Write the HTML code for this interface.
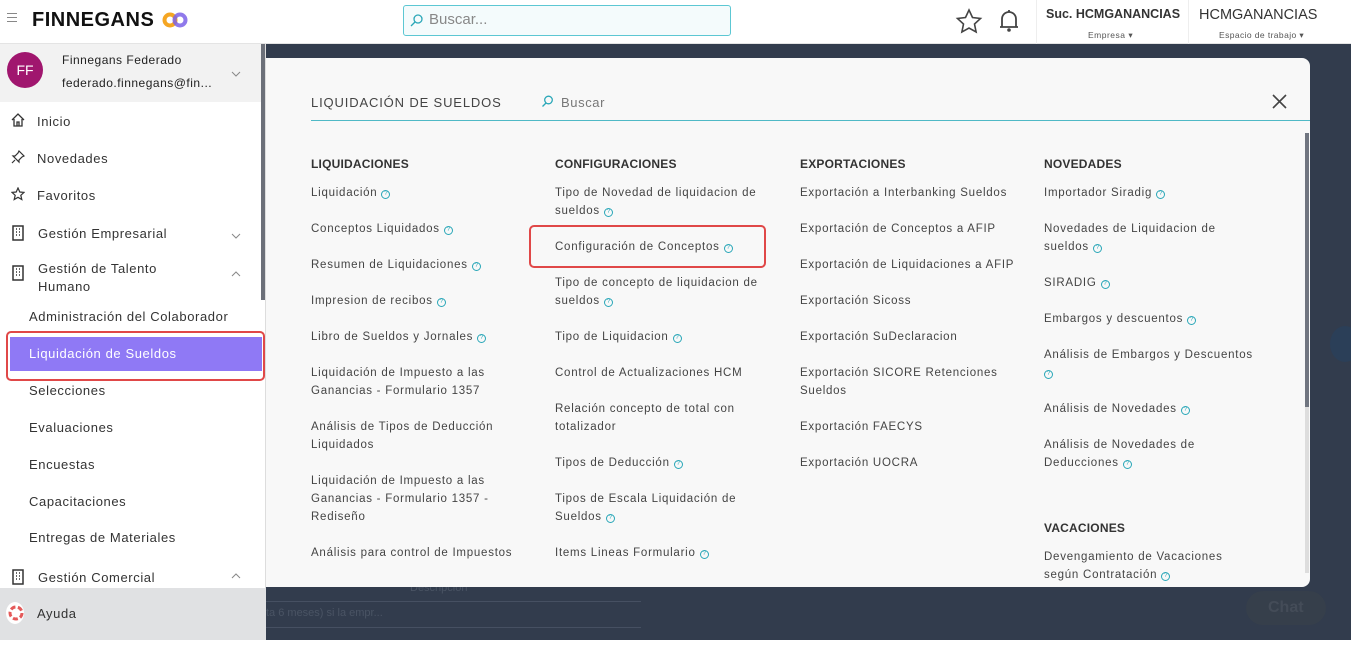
<!DOCTYPE html>
<html><head><meta charset="utf-8"><style>
*{margin:0;padding:0;box-sizing:border-box}
body{width:1351px;height:665px;overflow:hidden;background:#fff;font-family:"Liberation Sans",sans-serif;color:#333;position:relative}
.abs{position:absolute}
.top{left:0;top:0;width:1351px;height:44px;background:#fff;border-bottom:1px solid #e4e4e4}
.dark{left:266px;top:44px;width:1085px;height:596px;background:#323c4d}
.side{left:0;top:44px;width:266px;height:596px;background:#fff;border-right:1px solid #ddd}
.modal{left:266px;top:58px;width:1044px;height:529px;background:#f8f8f8;border-radius:0 8px 8px 0}
.it{position:absolute;font-size:11.5px;color:#444;line-height:18px;width:215px;letter-spacing:.75px}
.h{position:absolute;font-size:12px;font-weight:bold;color:#333;letter-spacing:.2px}
.q{display:inline-block;width:9px;height:9px;border:1px solid #2aa7b8;border-radius:50%;font-size:6px;line-height:7px;text-align:center;color:#2aa7b8;margin-left:4px;vertical-align:1px;letter-spacing:0}
.nav{position:absolute;left:37px;font-size:13px;color:#333;letter-spacing:.6px}
.sub{position:absolute;left:29px;font-size:13px;color:#333;letter-spacing:.6px}
.ic{position:absolute;left:11px}
</style></head><body>
<div class="abs top"></div>
<div class="abs" style="left:7px;top:13px;width:10px;height:1px;background:#888;box-shadow:0 4px 0 #888,0 8px 0 #888"></div>
<div class="abs" style="left:32px;top:9px;font-size:20px;font-weight:bold;letter-spacing:.5px;color:#111">FINNEGANS</div>
<svg class="abs" style="left:162px;top:12px" width="26" height="16"><circle cx="8" cy="8" r="5.5" fill="none" stroke="#f5a623" stroke-width="4"/><circle cx="18" cy="8" r="5.5" fill="none" stroke="#7b61e8" stroke-width="4" opacity=".85"/></svg>
<div class="abs" style="left:403px;top:5px;width:328px;height:31px;border:1px solid #5cc7d3;border-radius:3px;background:#f4fbfc"></div>
<svg class="abs" style="left:410px;top:13px" width="14" height="14"><circle cx="8" cy="6" r="4" fill="none" stroke="#2aa7b8" stroke-width="1.3"/><line x1="5" y1="9" x2="1" y2="13" stroke="#2aa7b8" stroke-width="1.3"/></svg>
<div class="abs" style="left:429px;top:11px;font-size:15px;color:#888">Buscar...</div>
<svg class="abs" style="left:955px;top:8px" width="28" height="26"><path d="M14 2l3.5 7.5 8 1-6 5.5 1.6 8-7.1-4-7.1 4 1.6-8-6-5.5 8-1z" fill="none" stroke="#444" stroke-width="1.6"/></svg>
<svg class="abs" style="left:998px;top:8px" width="22" height="26"><path d="M4 19V11a7 7 0 0114 0v8H4zM2 19h18M11 2v2" fill="none" stroke="#444" stroke-width="1.8"/><circle cx="11" cy="22" r="1.8" fill="#444"/></svg>
<div class="abs" style="left:1036px;top:0;width:1px;height:44px;background:#eee"></div>
<div class="abs" style="left:1188px;top:0;width:1px;height:44px;background:#eee"></div>
<div class="abs" style="left:1046px;top:7px;font-size:12.5px;font-weight:bold;color:#333">Suc. HCMGANANCIAS</div>
<div class="abs" style="left:1088px;top:30px;font-size:8.5px;color:#555;letter-spacing:.5px">Empresa ▾</div>
<div class="abs" style="left:1199px;top:7px;font-size:14.5px;color:#333">HCMGANANCIAS</div>
<div class="abs" style="left:1219px;top:30px;font-size:8.5px;color:#555;letter-spacing:.4px">Espacio de trabajo ▾</div>

<div class="abs dark"></div>
<div class="abs" style="left:1330px;top:326px;width:30px;height:36px;border-radius:50%;background:#2b3f58"></div>
<div class="abs" style="left:1246px;top:591px;width:80px;height:34px;border-radius:17px;background:#363f4b;color:#444c58;font-size:16px;font-weight:bold;padding:8px 0 0 22px">Chat</div>
<div class="abs" style="left:410px;top:582px;font-size:11px;color:#4a5464">Descripción</div>
<div class="abs" style="left:266px;top:601px;width:375px;height:1px;background:#465062"></div>
<div class="abs" style="left:266px;top:607px;font-size:11px;color:#4a5464">ta 6 meses) si la empr...</div>
<div class="abs" style="left:266px;top:627px;width:375px;height:1px;background:#465062"></div>

<div class="abs side"></div>
<div class="abs" style="left:0;top:44px;width:262px;height:58px;background:#f2f2f2"></div>
<div class="abs" style="left:7px;top:52px;width:36px;height:36px;border-radius:50%;background:#a0166e;color:#fff;font-size:14px;text-align:center;line-height:36px">FF</div>
<div class="abs" style="left:62px;top:53px;font-size:12px;color:#222;letter-spacing:.5px">Finnegans Federado</div>
<div class="abs" style="left:62px;top:76px;font-size:12px;color:#222;letter-spacing:.5px">federado.finnegans@fin...</div>
<svg class="abs" style="left:231px;top:71px" width="10" height="6"><path d="M1 1l4 4 4-4" fill="none" stroke="#888"/></svg>
<div class="abs" style="left:261px;top:44px;width:4px;height:256px;background:#6c7079"></div>
<svg class="ic" style="top:113px" width="14" height="14"><path d="M1 7L7 1l6 6M3 6v7h8V6M6 13V9h2v4" fill="none" stroke="#333" stroke-width="1.3"/></svg><div class="nav" style="top:114px">Inicio</div>
<svg class="ic" style="top:150px" width="14" height="14"><path d="M8 1l5 5-2 1-3 3 0 2-6-6 2 0 3-3zM4 10l-3 3" fill="none" stroke="#333" stroke-width="1.2"/></svg><div class="nav" style="top:151px">Novedades</div>
<svg class="ic" style="top:187px" width="14" height="14"><path d="M7 1l1.8 4 4.2.4-3.2 2.9 1 4.2L7 10.3 3.2 12.5l1-4.2L1 5.4 5.2 5z" fill="none" stroke="#333" stroke-width="1.2"/></svg><div class="nav" style="top:188px">Favoritos</div>
<svg class="ic" style="top:225px" width="14" height="16"><rect x="2" y="1" width="10" height="14" fill="none" stroke="#333" stroke-width="1.5"/><path d="M5 4h1M8 4h1M5 7h1M8 7h1M5 10h1M8 10h1" stroke="#333" stroke-width="1.5"/></svg><div class="nav" style="top:226px;left:38px">Gestión Empresarial</div>
<svg class="abs" style="left:231px;top:233px" width="10" height="6"><path d="M1 1l4 4 4-4" fill="none" stroke="#888"/></svg>
<svg class="ic" style="top:265px" width="14" height="16"><rect x="2" y="1" width="10" height="14" fill="none" stroke="#333" stroke-width="1.5"/><path d="M5 4h1M8 4h1M5 7h1M8 7h1M5 10h1M8 10h1" stroke="#333" stroke-width="1.5"/></svg><div class="nav" style="top:260px;left:38px;line-height:18px">Gestión de Talento<br>Humano</div>
<svg class="abs" style="left:231px;top:271px" width="10" height="6"><path d="M1 5l4-4 4 4" fill="none" stroke="#888"/></svg>
<div class="sub" style="top:309px">Administración del Colaborador</div>
<div class="abs" style="left:10px;top:337px;width:252px;height:34px;background:#8f79f5"></div>
<div class="abs" style="left:6px;top:331px;width:259px;height:50px;border:2px solid #e04848;border-radius:5px"></div>
<div class="sub" style="top:346px;color:#fff">Liquidación de Sueldos</div>
<div class="sub" style="top:383px">Selecciones</div>
<div class="sub" style="top:420px">Evaluaciones</div>
<div class="sub" style="top:457px">Encuestas</div>
<div class="sub" style="top:494px">Capacitaciones</div>
<div class="sub" style="top:530px">Entregas de Materiales</div>
<svg class="ic" style="top:569px" width="14" height="16"><rect x="2" y="1" width="10" height="14" fill="none" stroke="#333" stroke-width="1.5"/><path d="M5 4h1M8 4h1M5 7h1M8 7h1M5 10h1M8 10h1" stroke="#333" stroke-width="1.5"/></svg><div class="nav" style="top:570px;left:38px">Gestión Comercial</div>
<svg class="abs" style="left:231px;top:573px" width="10" height="6"><path d="M1 5l4-4 4 4" fill="none" stroke="#888"/></svg>
<div class="abs" style="left:0;top:588px;width:266px;height:52px;background:#e0e1e3"></div>
<div class="abs" style="left:6px;top:602px;width:18px;height:22px;border-radius:50%;background:#fff"></div>
<svg class="abs" style="left:8px;top:605px" width="16" height="16"><circle cx="8" cy="8" r="6" fill="none" stroke="#e45a5a" stroke-width="3" stroke-dasharray="5 2.5"/></svg>
<div class="nav" style="top:606px">Ayuda</div>

<div class="abs modal"></div>
<div class="abs" style="left:311px;top:95px;font-size:13px;color:#444;letter-spacing:.85px">LIQUIDACIÓN DE SUELDOS</div>
<svg class="abs" style="left:541px;top:95px" width="13" height="13"><circle cx="7.5" cy="5" r="3.8" fill="none" stroke="#2aa7b8" stroke-width="1.3"/><line x1="5" y1="8" x2="1.5" y2="11.5" stroke="#2aa7b8" stroke-width="1.3"/></svg>
<div class="abs" style="left:561px;top:95px;font-size:13px;color:#777;letter-spacing:.6px">Buscar</div>
<svg class="abs" style="left:1272px;top:94px" width="15" height="15"><path d="M1 1l13 13M14 1L1 14" stroke="#444" stroke-width="1.6"/></svg>
<div class="abs" style="left:311px;top:120px;width:999px;height:1px;background:#4fb9c6"></div>
<div class="abs" style="left:1305px;top:133px;width:4px;height:440px;background:#ddd"></div>
<div class="abs" style="left:1305px;top:133px;width:4px;height:274px;background:#707580"></div>

<div class="h" style="left:311px;top:157px">LIQUIDACIONES</div>
<div class="h" style="left:555px;top:157px">CONFIGURACIONES</div>
<div class="h" style="left:800px;top:157px">EXPORTACIONES</div>
<div class="h" style="left:1044px;top:157px">NOVEDADES</div>
<div class="h" style="left:1044px;top:521px">VACACIONES</div>

<div class="it" style="left:311px;top:184px">Liquidación<span class="q">?</span></div>
<div class="it" style="left:311px;top:220px">Conceptos Liquidados<span class="q">?</span></div>
<div class="it" style="left:311px;top:256px">Resumen de Liquidaciones<span class="q">?</span></div>
<div class="it" style="left:311px;top:292px">Impresion de recibos<span class="q">?</span></div>
<div class="it" style="left:311px;top:328px">Libro de Sueldos y Jornales<span class="q">?</span></div>
<div class="it" style="left:311px;top:364px">Liquidación de Impuesto a las<br>Ganancias - Formulario 1357</div>
<div class="it" style="left:311px;top:418px">Análisis de Tipos de Deducción<br>Liquidados</div>
<div class="it" style="left:311px;top:472px">Liquidación de Impuesto a las<br>Ganancias - Formulario 1357 -<br>Rediseño</div>
<div class="it" style="left:311px;top:544px;width:240px">Análisis para control de Impuestos</div>

<div class="it" style="left:555px;top:184px">Tipo de Novedad de liquidacion de<br>sueldos<span class="q">?</span></div>
<div class="abs" style="left:529px;top:225px;width:237px;height:43px;border:2px solid #e04848;border-radius:5px"></div>
<div class="it" style="left:555px;top:238px;width:230px">Configuración de Conceptos<span class="q">?</span></div>
<div class="it" style="left:555px;top:274px">Tipo de concepto de liquidacion de<br>sueldos<span class="q">?</span></div>
<div class="it" style="left:555px;top:328px">Tipo de Liquidacion<span class="q">?</span></div>
<div class="it" style="left:555px;top:364px;width:230px">Control de Actualizaciones HCM</div>
<div class="it" style="left:555px;top:400px">Relación concepto de total con<br>totalizador</div>
<div class="it" style="left:555px;top:454px">Tipos de Deducción<span class="q">?</span></div>
<div class="it" style="left:555px;top:490px">Tipos de Escala Liquidación de<br>Sueldos<span class="q">?</span></div>
<div class="it" style="left:555px;top:544px;width:230px">Items Lineas Formulario<span class="q">?</span></div>

<div class="it" style="left:800px;top:184px;width:240px">Exportación a Interbanking Sueldos</div>
<div class="it" style="left:800px;top:220px;width:240px">Exportación de Conceptos a AFIP</div>
<div class="it" style="left:800px;top:256px;width:240px">Exportación de Liquidaciones a AFIP</div>
<div class="it" style="left:800px;top:292px">Exportación Sicoss</div>
<div class="it" style="left:800px;top:328px">Exportación SuDeclaracion</div>
<div class="it" style="left:800px;top:364px;width:240px">Exportación SICORE Retenciones<br>Sueldos</div>
<div class="it" style="left:800px;top:418px">Exportación FAECYS</div>
<div class="it" style="left:800px;top:454px">Exportación UOCRA</div>

<div class="it" style="left:1044px;top:184px">Importador Siradig<span class="q">?</span></div>
<div class="it" style="left:1044px;top:220px;width:240px">Novedades de Liquidacion de<br>sueldos<span class="q">?</span></div>
<div class="it" style="left:1044px;top:274px">SIRADIG<span class="q">?</span></div>
<div class="it" style="left:1044px;top:310px">Embargos y descuentos<span class="q">?</span></div>
<div class="it" style="left:1044px;top:346px;width:240px">Análisis de Embargos y Descuentos<br><span class="q" style="margin-left:0">?</span></div>
<div class="it" style="left:1044px;top:400px">Análisis de Novedades<span class="q">?</span></div>
<div class="it" style="left:1044px;top:436px;width:240px">Análisis de Novedades de<br>Deducciones<span class="q">?</span></div>
<div class="it" style="left:1044px;top:548px;width:240px">Devengamiento de Vacaciones<br>según Contratación<span class="q">?</span></div>
</body></html>
